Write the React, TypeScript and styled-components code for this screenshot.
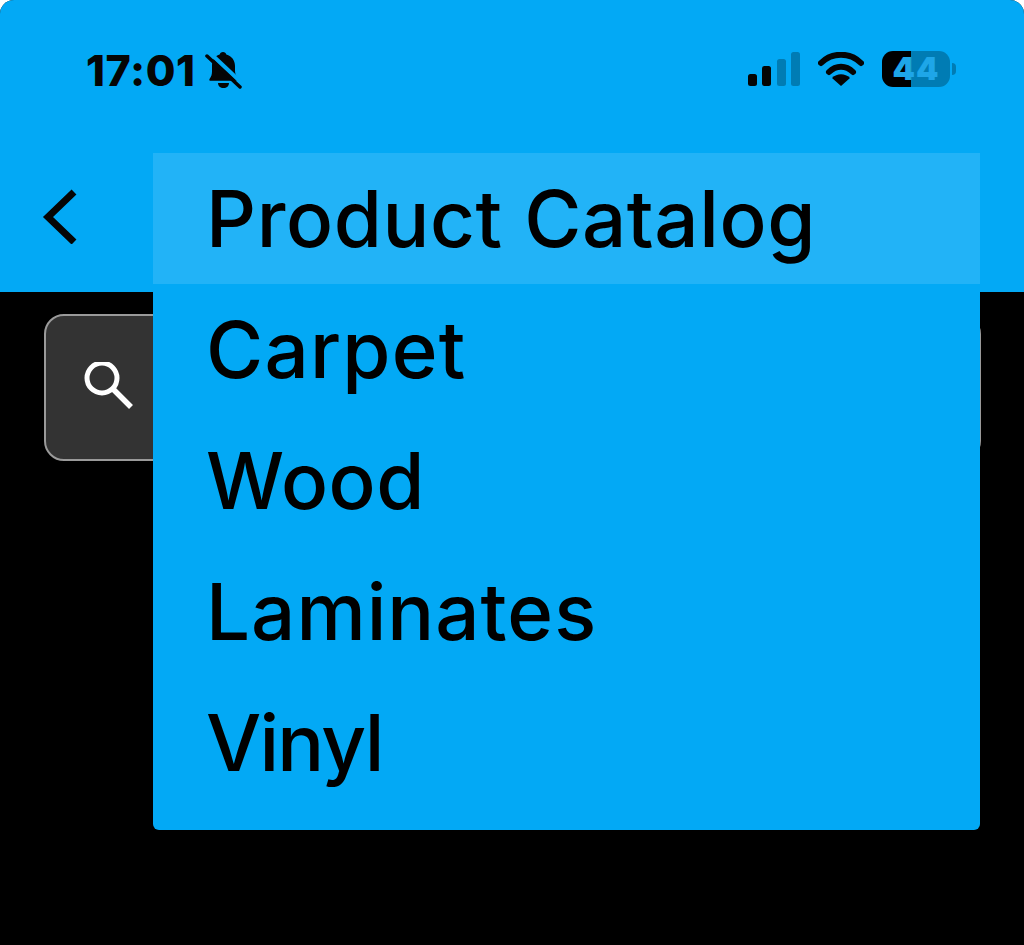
import React from "react";
import styled, { createGlobalStyle } from "styled-components";

const Global = createGlobalStyle`
  html, body { margin: 0; padding: 0; background: #fff; }
  #root { width: 1024px; height: 945px; overflow: hidden; }
`;

const Screen = styled.div`
  position: relative;
  width: 1024px;
  height: 945px;
  background: #000;
  border-radius: 14px 14px 0 0;
  overflow: hidden;
  font-family: Inter, "Liberation Sans", sans-serif;
`;

const Header = styled.header`
  height: 292px;
  background: #03a9f5;
  display: flex;
  flex-direction: column;
`;

const StatusBar = styled.div`
  height: 140px;
  padding: 50px 68px 0 86px;
  box-sizing: border-box;
  display: flex;
  justify-content: space-between;
  align-items: flex-start;
`;

const TimeGroup = styled.div`
  display: flex;
  align-items: center;
  gap: 9px;
  height: 40px;
`;

const Time = styled.span`
  font-size: 43px;
  font-weight: 800;
  line-height: 38px;
  color: #050505;
  letter-spacing: 0.6px;
`;

const Indicators = styled.div`
  display: flex;
  align-items: center;
  gap: 18px;
  height: 38px;
`;

const BatteryWrap = styled.div`
  display: flex;
  align-items: center;
  gap: 2px;
`;

const Battery = styled.div`
  width: 68px;
  height: 36px;
  border-radius: 11px;
  display: flex;
  align-items: center;
  justify-content: center;
  background: linear-gradient(90deg, #000 0 29px, #007cb4 29px 100%);
  color: #1ea6e8;
  font-size: 32px;
  font-weight: 900;
  letter-spacing: 1px;
  line-height: 36px;
`;

const BatteryTip = styled.div`
  width: 4px;
  height: 12px;
  border-radius: 0 4px 4px 0;
  background: #007cb4;
`;

const NavBar = styled.div`
  padding: 48px 0 0 42px;
  display: flex;
`;

const Content = styled.main`
  padding: 22px 43px 0 44px;
`;

const SearchBox = styled.div`
  height: 147px;
  box-sizing: border-box;
  background: #333;
  border: 2px solid #9a9a9a;
  border-radius: 20px;
  padding: 46px 0 0 38px;
  display: flex;
  align-items: flex-start;
`;

const Menu = styled.nav`
  position: absolute;
  left: 153px;
  top: 153px;
  width: 827px;
  height: 677px;
  background: #03a9f5;
  border-radius: 0 0 6px 6px;
  display: flex;
  flex-direction: column;
`;

const MenuItem = styled.div<{ $active?: boolean; $tracking?: number }>`
  height: 131px;
  flex: none;
  padding-left: 53px;
  display: flex;
  align-items: center;
  font-size: 78px;
  font-weight: 550;
  letter-spacing: ${(p) => p.$tracking ?? 0.6}px;
  color: #000;
  background: ${(p) => (p.$active ? "#22b3f7" : "transparent")};
`;

export default function App() {
  return (
    <Screen>
      <Global />
      <Header>
        <StatusBar>
          <TimeGroup>
            <Time>17:01</Time>
            <svg width="38" height="38" viewBox="0 0 38 38">
              <path d="M18 1c1.800 0 3 1 3.300 2.400C27 5 30 9.500 30 15v5c0 3 1.500 5.500 3.500 8 .5 1 0 1.800-1 1.800H5.500c-1 0-1.500-.8-1-1.800C6.500 25.500 7 23 7 20v-5c0-5.500 2-10 7.700-11.600C15 2 16.200 1 18 1z" fill="#050505" />
              <path d="M13 32h11c0 3-2.300 5-5.500 5S13 35 13 32z" fill="#050505" />
              <path d="M6 3 L38 33" stroke="#03a9f5" strokeWidth="4" />
              <path d="M2 5 L35 36" stroke="#050505" strokeWidth="3.500" strokeLinecap="round" />
            </svg>
          </TimeGroup>
          <Indicators>
            <svg width="52" height="34" viewBox="0 0 52 34">
              <rect x="0" y="22" width="9" height="12" rx="2.500" fill="#050505" />
              <rect x="14" y="14" width="9" height="20" rx="2.500" fill="#050505" />
              <rect x="29" y="7" width="9" height="27" rx="2.500" fill="#007cb4" />
              <rect x="43" y="0" width="9" height="34" rx="2.500" fill="#007cb4" />
            </svg>
            <svg width="46" height="34" viewBox="0 0 46 34">
              <path d="M3 11 C14 0 32 0 43 11" fill="none" stroke="#050505" strokeWidth="6" strokeLinecap="round" />
              <path d="M11 20 C18 13 28 13 35 20" fill="none" stroke="#050505" strokeWidth="6" strokeLinecap="round" />
              <path d="M23 34 L14 26 C19 21 27 21 32 26 Z" fill="#050505" />
            </svg>
            <BatteryWrap>
              <Battery>44</Battery>
              <BatteryTip />
            </BatteryWrap>
          </Indicators>
        </StatusBar>
        <NavBar>
          <svg width="36" height="56" viewBox="0 0 36 56">
            <path d="M32 4 L6 29 L32 54" fill="none" stroke="#050505" strokeWidth="7" />
          </svg>
        </NavBar>
      </Header>
      <Content>
        <SearchBox>
          <svg width="50" height="50" viewBox="0 0 50 50">
            <circle cx="18" cy="16" r="15" fill="none" stroke="#fff" strokeWidth="5" />
            <path d="M29 27 L47 45" stroke="#fff" strokeWidth="5.500" />
          </svg>
        </SearchBox>
      </Content>
      <Menu>
        <MenuItem $active>Product Catalog</MenuItem>
        <MenuItem $tracking={1.2}>Carpet</MenuItem>
        <MenuItem>Wood</MenuItem>
        <MenuItem $tracking={1}>Laminates</MenuItem>
        <MenuItem $tracking={-1.8}>Vinyl</MenuItem>
      </Menu>
    </Screen>
  );
}
